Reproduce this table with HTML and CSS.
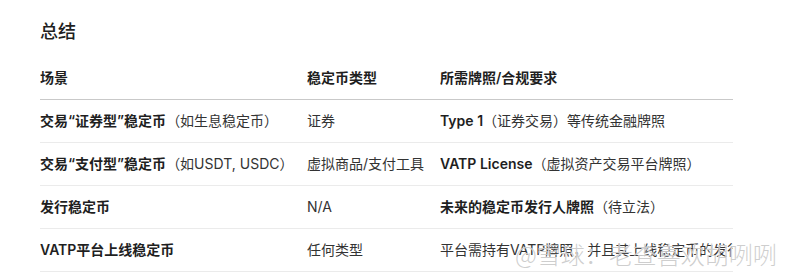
FILE: index.html
```html
<!DOCTYPE html>
<html lang="zh-CN">
<head>
<meta charset="utf-8">
<title>总结</title>
<link rel="stylesheet" href="styles.css">
</head>
<body>
<div class="page">
  <h2 class="title">总结</h2>
  <div class="table-wrap">
    <table class="summary">
      <colgroup>
        <col class="c1"><col class="c2"><col class="c3">
      </colgroup>
      <thead>
        <tr><th>场景</th><th>稳定币类型</th><th>所需牌照/合规要求</th></tr>
      </thead>
      <tbody>
        <tr>
          <td><b>交易“证券型”稳定币</b>（如生息稳定币）</td>
          <td>证券</td>
          <td><b>Type 1</b>（证券交易）等传统金融牌照</td>
        </tr>
        <tr>
          <td><b>交易“支付型”稳定币</b>（如USDT, USDC）</td>
          <td>虚拟商品/支付工具</td>
          <td><b>VATP License</b>（虚拟资产交易平台牌照）</td>
        </tr>
        <tr>
          <td><b>发行稳定币</b></td>
          <td>N/A</td>
          <td><b>未来的稳定币发行人牌照</b>（待立法）</td>
        </tr>
        <tr>
          <td><b>VATP平台上线稳定币</b></td>
          <td>任何类型</td>
          <td>平台需持有VATP牌照，并且其上线稳定币的发行人需符合监管要求</td>
        </tr>
      </tbody>
    </table>
  </div>
  <div class="watermark">@雪球：老查喜欢胡咧咧</div>
</div>
</body>
</html>
```
FILE: styles.css
```css
html, body {
  margin: 0;
  background: #ffffff;
}
body {
  font-family: Inter, "Noto Sans CJK SC", sans-serif;
  color: #333333;
}
.page {
  position: relative;
  width: 800px;
  height: 280px;
  overflow: hidden;
  box-sizing: border-box;
  padding: 19px 0 0 40px;
}
.title {
  margin: 0 0 12px;
  font-size: 18px;
  line-height: 26px;
  font-weight: 500;
  color: #1f1f1f;
}
.table-wrap {
  width: 693px;
  overflow: hidden;
}
.summary {
  width: 693px;
  table-layout: fixed;
  border-collapse: collapse;
  font-size: 14px;
  line-height: 22px;
}
.summary .c1 { width: 267px; }
.summary .c2 { width: 133px; }
.summary .c3 { width: 293px; }
.summary th,
.summary td {
  padding: 10px 0;
  text-align: left;
  white-space: nowrap;
  overflow: hidden;
  vertical-align: middle;
}
.summary th {
  font-weight: 600;
  color: #1f1f1f;
  border-bottom: 1px solid #c9c9c9;
}
.summary td {
  font-weight: 400;
  color: #333333;
  border-bottom: 1px solid #ebebeb;
}
.summary b {
  font-weight: 600;
  color: #1f1f1f;
}
.watermark {
  position: absolute;
  left: 515px;
  top: 242px;
  font-size: 24px;
  line-height: 24px;
  font-family: "Noto Sans CJK SC", sans-serif;
  font-weight: 300;
  color: rgba(190, 190, 190, 0.75);
  white-space: nowrap;
  text-shadow: 0 0 1px #ffffff;
}
```
